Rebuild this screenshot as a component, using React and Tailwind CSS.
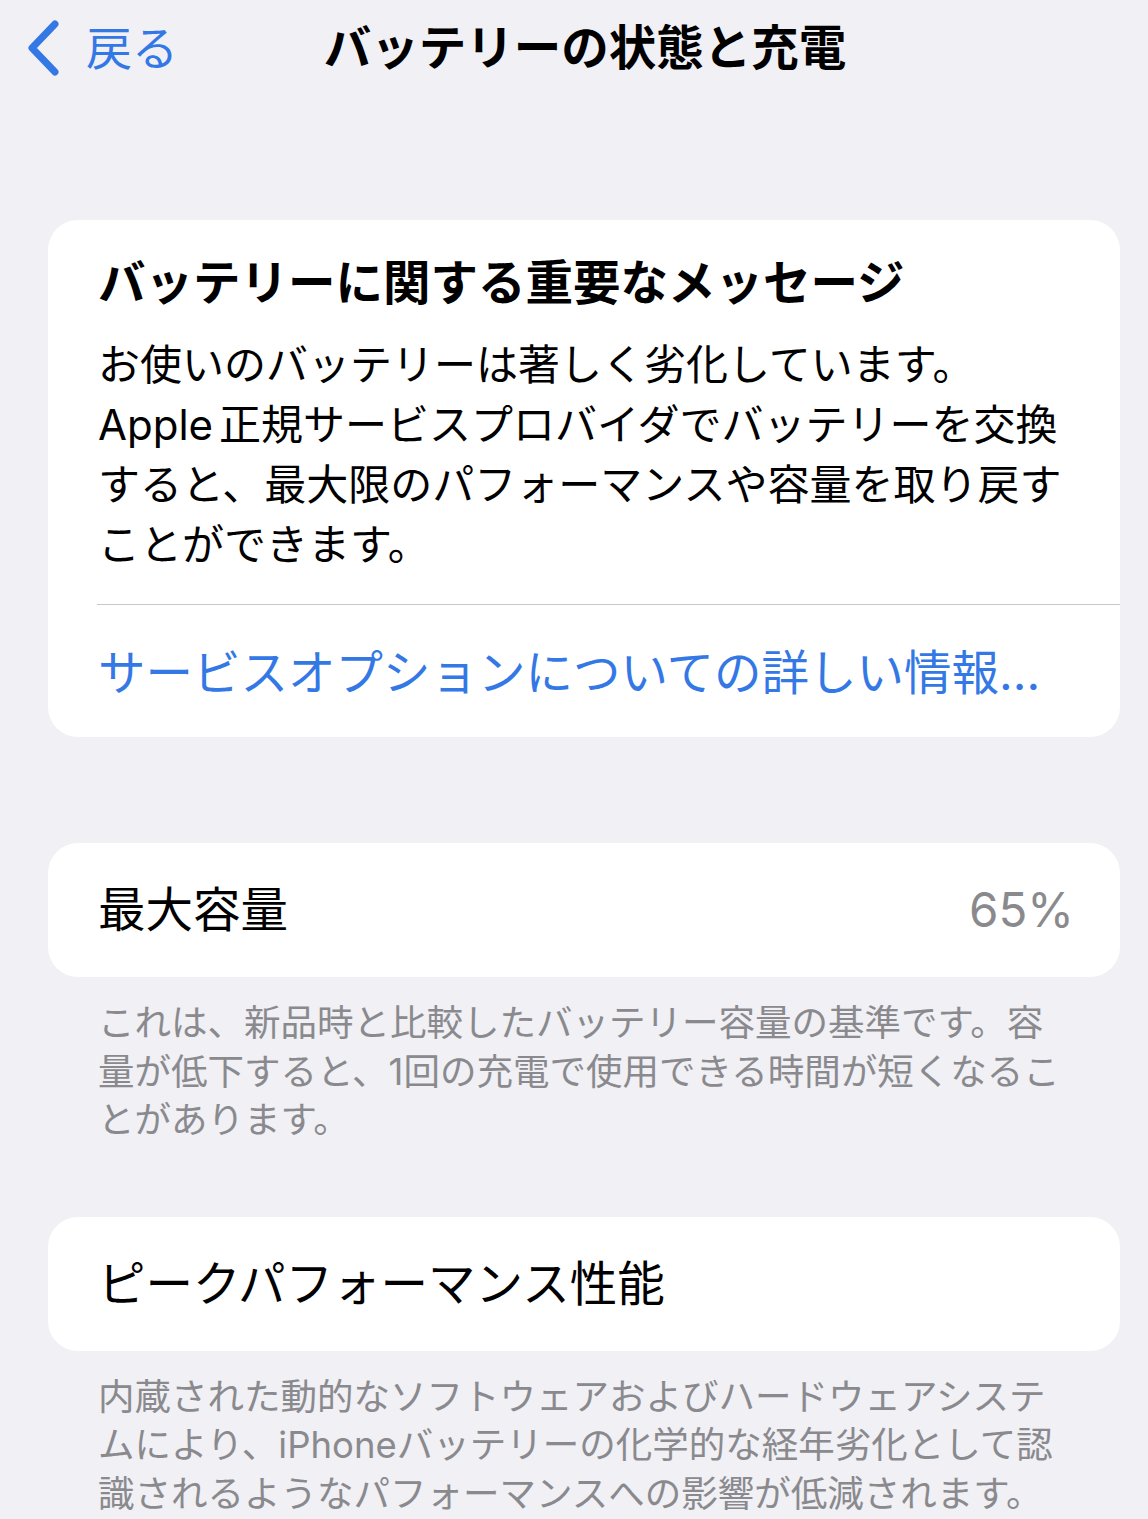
import React from 'react';

const FONT = { fontFamily: '"Inter", "Noto Sans CJK JP", sans-serif' };

function Chevron() {
  return (
    <svg width="40" height="60" viewBox="0 0 40 60" fill="none">
      <polyline
        points="31,6 8,30 31,54"
        stroke="#3478e5"
        strokeWidth="7"
        strokeLinecap="round"
        strokeLinejoin="round"
      />
    </svg>
  );
}

function Footer({ lines, className }) {
  return (
    <div className={`ml-[98px] text-[36.5px] leading-[48.5px] text-[#8a8a8e] whitespace-nowrap ${className}`}>
      {lines.map((l, i) => (
        <div key={i}>{l}</div>
      ))}
    </div>
  );
}

export default function App() {
  return (
    <div className="min-h-screen w-[1148px] bg-[#f0f0f5] text-black overflow-hidden" style={FONT}>
      {/* Navigation bar */}
      <header className="grid grid-cols-[1fr_auto_1fr] items-center h-[96px]">
        <div className="flex items-center pl-[24px] gap-[22px]">
          <Chevron />
          <span className="text-[46px] leading-[56px] text-[#3478e5]">戻る</span>
        </div>
        <h1 className="ml-[22px] text-[47.5px] leading-[56px] font-bold whitespace-nowrap">
          バッテリーの状態と充電
        </h1>
        <div />
      </header>

      {/* Important message */}
      <section className="ml-[48px] mt-[124px] w-[1072px] bg-white rounded-[30px]">
        <div className="pl-[50px] pt-[35px]">
          <h2 className="text-[47.5px] leading-[56px] font-bold whitespace-nowrap">
            バッテリーに関する重要なメッセージ
          </h2>
          <div className="mt-[24px] text-[42px] leading-[60px] whitespace-nowrap">
            <div>お使いのバッテリーは著しく劣化しています。</div>
            <div>
              <span className="mr-[6px]">Apple</span>正規サービスプロバイダでバッテリーを交換
            </div>
            <div>すると、最大限のパフォーマンスや容量を取り戻す</div>
            <div>ことができます。</div>
          </div>
        </div>
        <div className="ml-[49px] mt-[29px] h-[1px] bg-[#c8c8cc]" />
        <div className="pl-[50px] pt-[40px] pb-[36px] text-[47.5px] leading-[56px] text-[#3478e5] whitespace-nowrap">
          サービスオプションについての詳しい情報...
        </div>
      </section>

      {/* Maximum capacity */}
      <section className="ml-[48px] mt-[106px] w-[1072px] bg-white rounded-[30px] flex items-center justify-between pl-[50px] pr-[46px] py-[39px]">
        <span className="text-[47.5px] leading-[56px]">最大容量</span>
        <span className="text-[47.5px] leading-[56px] text-[#8a8a8e]">65%</span>
      </section>
      <Footer
        className="mt-[22px]"
        lines={[
          'これは、新品時と比較したバッテリー容量の基準です。容',
          '量が低下すると、1回の充電で使用できる時間が短くなるこ',
          'とがあります。',
        ]}
      />

      {/* Peak performance */}
      <section className="ml-[48px] mt-[72px] w-[1072px] bg-white rounded-[30px] pl-[50px] py-[39px]">
        <span className="text-[47.5px] leading-[56px]">ピークパフォーマンス性能</span>
      </section>
      <Footer
        className="mt-[22px]"
        lines={[
          '内蔵された動的なソフトウェアおよびハードウェアシステ',
          'ムにより、iPhoneバッテリーの化学的な経年劣化として認',
          '識されるようなパフォーマンスへの影響が低減されます。',
        ]}
      />
    </div>
  );
}
